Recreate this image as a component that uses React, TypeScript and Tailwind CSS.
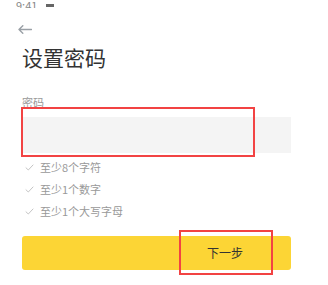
import React from "react";

function Check() {
  return (
    <svg width="9" height="7" viewBox="0 0 9 7" fill="none">
      <path d="M1 3.8 L3.3 6 L8 1" stroke="#c4c4c4" strokeWidth="1" strokeLinecap="round" strokeLinejoin="round" />
    </svg>
  );
}

export default function App() {
  const font = { fontFamily: '"Noto Sans CJK SC", "Noto Sans", sans-serif' };
  return (
    <div className="w-[328px] h-[285px] bg-white overflow-hidden relative" style={font}>
      <div className="h-[8px] pl-[16px] flex items-end gap-[9px] overflow-hidden">
        <span className="text-[11px] leading-[11px] text-[#888] mb-[-3px]">9:41</span>
        <span className="w-[8px] h-[3px] bg-[#666] mb-[1px]" />
      </div>
      <div className="pl-[18px] pt-[17px] h-[26px]">
        <svg width="14" height="9" viewBox="0 0 14 9" fill="none">
          <path d="M13.5 4.5 H1 M4.8 0.7 L1 4.5 L4.8 8.3" stroke="#9aa0a6" strokeWidth="1.4" strokeLinecap="round" strokeLinejoin="round" />
        </svg>
      </div>
      <div className="pl-[22px] mt-[9px] text-[21px] leading-[28px] text-[#333]">设置密码</div>
      <div className="pl-[22px] mt-[24px]">
        <div className="text-[11px] leading-[14px] text-[#999]">密码</div>
        <div className="mt-[8px] w-[269px] h-[36px] bg-[#f4f4f4]" />
      </div>
      <div className="pl-[25px] mt-[7px] flex flex-col gap-[8px]">
        {["至少8个字符", "至少1个数字", "至少1个大写字母"].map((t) => (
          <div key={t} className="flex items-center h-[14px]">
            <Check />
            <span className="ml-[6px] text-[11px] leading-[14px] text-[#999]">{t}</span>
          </div>
        ))}
      </div>
      <div className="pl-[22px] mt-[18px]">
        <div className="w-[269px] h-[34px] bg-[#fcd535] rounded-[3px] flex items-center pl-[185px] text-[12px] text-[#333]">
          下一步
        </div>
      </div>
      <div className="absolute left-[21px] top-[107px] w-[234px] h-[50px] border-2 border-[#f24343]" />
      <div className="absolute left-[179px] top-[230px] w-[94px] h-[45px] border-2 border-[#f24343]" />
    </div>
  );
}
